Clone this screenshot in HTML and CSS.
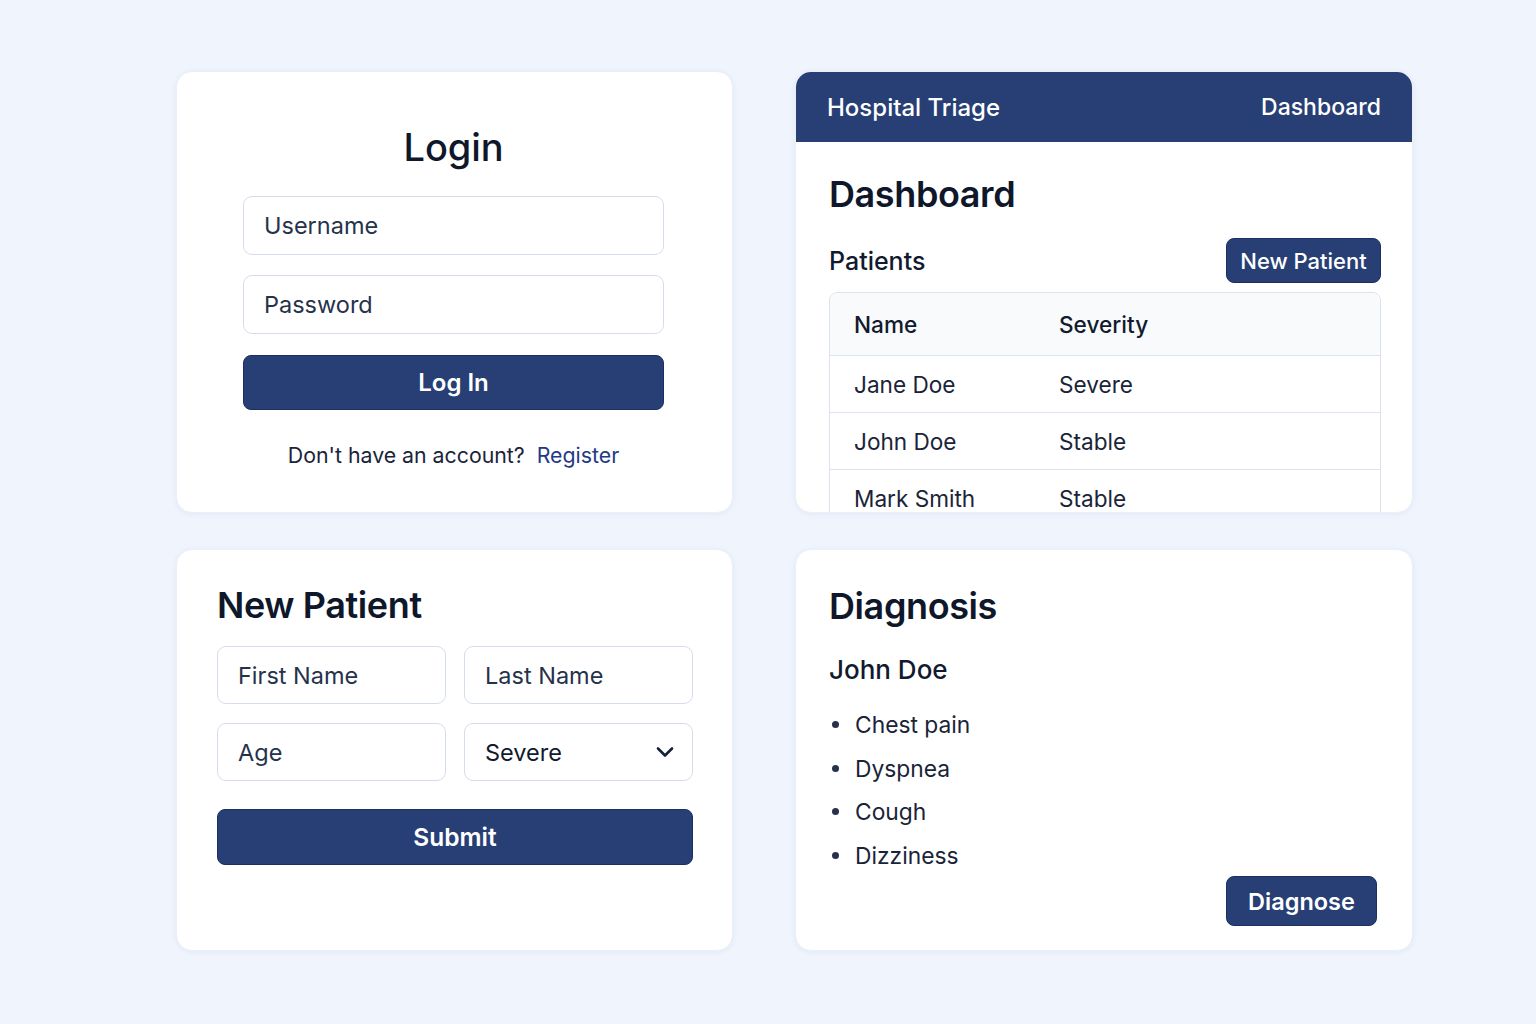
FILE: index.html
```html
<!DOCTYPE html>
<html lang="en">
<head>
<meta charset="utf-8">
<title>Hospital Triage</title>
<link rel="stylesheet" href="styles.css">
</head>
<body>
<main class="grid">
  <section class="card login">
    <h1 class="login-title">Login</h1>
    <div class="field">Username</div>
    <div class="field">Password</div>
    <button class="btn btn-block btn-login">Log In</button>
    <p class="register">Don't have an account?&nbsp; <a href="#">Register</a></p>
  </section>

  <section class="card dash">
    <header class="topbar">
      <span class="brand">Hospital Triage</span>
      <span class="nav">Dashboard</span>
    </header>
    <div class="dash-body">
      <h2 class="title">Dashboard</h2>
      <div class="patients-row">
        <span class="subtitle">Patients</span>
        <button class="btn btn-small">New Patient</button>
      </div>
      <div class="table">
        <div class="tr th"><span>Name</span><span>Severity</span></div>
        <div class="tr"><span>Jane Doe</span><span>Severe</span></div>
        <div class="tr"><span>John Doe</span><span>Stable</span></div>
        <div class="tr"><span>Mark Smith</span><span>Stable</span></div>
      </div>
    </div>
  </section>

  <section class="card newpat">
    <h2 class="title">New Patient</h2>
    <div class="form-grid">
      <div class="field">First Name</div>
      <div class="field">Last Name</div>
      <div class="field">Age</div>
      <div class="field select">
        <span class="sel-value">Severe</span>
        <svg class="chev" width="18" height="12" viewBox="0 0 18 12"><path d="M2 2.5 L9 9.5 L16 2.5" fill="none" stroke="#16213a" stroke-width="2.6" stroke-linecap="round" stroke-linejoin="round"/></svg>
      </div>
    </div>
    <button class="btn btn-block btn-submit">Submit</button>
  </section>

  <section class="card diag">
    <h2 class="title">Diagnosis</h2>
    <h3 class="patient">John Doe</h3>
    <ul class="symptoms">
      <li>Chest pain</li>
      <li>Dyspnea</li>
      <li>Cough</li>
      <li>Dizziness</li>
    </ul>
    <button class="btn btn-diag">Diagnose</button>
  </section>
</main>
</body>
</html>
```

FILE: styles.css
```css
* { box-sizing: border-box; }

html, body {
  margin: 0;
  padding: 0;
}

body {
  background: #eff4fd;
  font-family: Inter, "Noto Sans", "Liberation Sans", sans-serif;
  color: #111a2e;
  width: 1536px;
  height: 1024px;
  overflow: hidden;
}

.grid {
  display: grid;
  grid-template-columns: 557px 618px;
  grid-template-rows: 442px 402px;
  column-gap: 62px;
  row-gap: 36px;
  padding: 71px 0 0 176px;
}

.card {
  background: #ffffff;
  border-radius: 16px;
  box-shadow: 0 1px 6px rgba(30, 60, 120, 0.06);
  border: 1px solid #eaf0f9;
  overflow: hidden;
}

/* Login */
.login {
  padding: 52px 68px 0 66px;
  display: flex;
  flex-direction: column;
}
.login-title {
  margin: 0 0 26px;
  text-align: center;
  font-size: 38px;
  line-height: 46px;
  font-weight: 500;
  color: #0f172a;
  letter-spacing: -0.1px;
}
.field {
  height: 58px;
  border: 1px solid #d5dcea;
  border-radius: 9px;
  padding: 0 20px;
  display: flex;
  align-items: center;
  font-size: 23.5px;
  color: #26324a;
  background: #fff;
}
.login .field { height: 59px; }
.login .field + .field { margin-top: 20px; }

.btn {
  border: 1px solid #1b2f62;
  background: #273f75;
  color: #fff;
  font-family: inherit;
  font-weight: 600;
  border-radius: 8px;
  cursor: pointer;
  padding: 0;
}
.btn-block {
  width: 100%;
  display: block;
}
.btn-login {
  margin-top: 21px;
  height: 55px;
  font-size: 24px;
  font-weight: 600;
}
.register {
  margin: 31px 0 0;
  text-align: center;
  font-size: 21.3px;
  line-height: 28px;
  color: #1a2438;
}
.register a {
  color: #1f3a86;
  text-decoration: none;
}

/* Dashboard */
.dash {
  display: flex;
  flex-direction: column;
}
.topbar {
  height: 70px;
  flex: none;
  background: #273f75;
  color: #fff;
  display: flex;
  align-items: center;
  justify-content: space-between;
  padding: 0 31px 0 31px;
  font-size: 24px;
  font-weight: 500;
}
.nav { font-size: 23px; }
.dash-body {
  padding: 30px 31px 0 33px;
}
.title {
  margin: 0;
  font-size: 36px;
  line-height: 44px;
  font-weight: 600;
  color: #0f172a;
  letter-spacing: -0.4px;
}
.patients-row {
  margin-top: 22px;
  display: flex;
  justify-content: space-between;
  align-items: center;
}
.subtitle {
  font-size: 25px;
  font-weight: 500;
  color: #111a2e;
}
.btn-small {
  height: 45px;
  width: 155px;
  font-size: 22px;
  font-weight: 500;
}
.table {
  margin-top: 9px;
  border: 1px solid #dde3ee;
  border-radius: 8px;
  overflow: hidden;
}
.tr {
  display: grid;
  grid-template-columns: 205px 1fr;
  height: 57px;
  align-items: center;
  font-size: 22.6px;
  color: #1a2438;
  border-top: 1px solid #dde3ee;
}
.tr span { padding-left: 24px; }
.tr.th {
  height: 62px;
  border-top: none;
  background: #f8fafc;
  font-weight: 500;
  color: #111a2e;
}

/* New patient */
.newpat {
  padding: 33px 39px 0 40px;
}
.form-grid {
  margin-top: 19px;
  display: grid;
  grid-template-columns: 1fr 1fr;
  column-gap: 18px;
  row-gap: 19px;
}
.form-grid .field {
  height: 58px;
  font-size: 23.5px;
}
.select {
  justify-content: space-between;
  padding-right: 18px;
}
.sel-value { color: #111a2e; }
.chev { display: block; }
.btn-submit {
  margin-top: 28px;
  height: 56px;
  font-size: 24.5px;
}

/* Diagnosis */
.diag {
  padding: 34px 35px 0 33px;
  display: flex;
  flex-direction: column;
}
.patient {
  margin: 25px 0 0;
  font-size: 26px;
  line-height: 34px;
  font-weight: 500;
  color: #111a2e;
}
.symptoms {
  list-style: none;
  margin: 16px 0 0;
  padding: 0;
}
.symptoms li {
  display: flex;
  align-items: center;
  height: 43.5px;
  font-size: 22.8px;
  color: #1a2438;
}
.symptoms li::before {
  content: "";
  width: 7px;
  height: 7px;
  border-radius: 50%;
  background: #26324a;
  margin: 0 16px 0 3px;
  flex: none;
}
.btn-diag {
  align-self: flex-end;
  margin-top: -1px;
  width: 151px;
  height: 50px;
  font-size: 23.5px;
}
```
